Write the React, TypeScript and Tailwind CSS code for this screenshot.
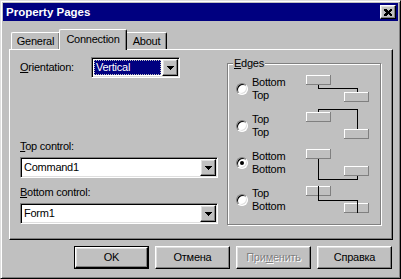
import React from "react";

const raised =
  "border border-t-white border-l-white border-r-black border-b-black shadow-[inset_-1px_-1px_0_#808080,inset_1px_1px_0_#dfdfdf]";
const sunken =
  "border border-t-[#808080] border-l-[#808080] border-r-white border-b-white shadow-[inset_1px_1px_0_#000,inset_-1px_-1px_0_#dfdfdf]";

function Arrow() {
  return (
    <svg width="7" height="4" viewBox="0 0 7 4" shapeRendering="crispEdges">
      <rect x="0" y="0" width="7" height="1" fill="#000" />
      <rect x="1" y="1" width="5" height="1" fill="#000" />
      <rect x="2" y="2" width="3" height="1" fill="#000" />
      <rect x="3" y="3" width="1" height="1" fill="#000" />
    </svg>
  );
}

function DropButton() {
  return (
    <div className={`w-[16px] h-full flex items-center justify-center bg-[#c0c0c0] ${raised}`}>
      <Arrow />
    </div>
  );
}

function U({ children }: { children: React.ReactNode }) {
  return <span className="underline underline-offset-[1px]">{children}</span>;
}

function Radio({ checked }: { checked?: boolean }) {
  return (
    <div
      className={`w-[12px] h-[12px] shrink-0 rounded-full bg-white flex items-center justify-center border border-t-[#808080] border-l-[#808080] border-r-white border-b-white shadow-[inset_1px_1px_0_#000,inset_-1px_-1px_0_#dfdfdf]`}
    >
      {checked && <div className="w-[4px] h-[4px] rounded-full bg-black" />}
    </div>
  );
}

function Box({ x, y }: { x: number; y: number }) {
  return (
    <g shapeRendering="crispEdges">
      <rect x={x} y={y} width="25" height="10" fill="#c0c0c0" />
      <line x1={x} y1={y + 0.5} x2={x + 25} y2={y + 0.5} stroke="#fff" />
      <line x1={x + 0.5} y1={y} x2={x + 0.5} y2={y + 10} stroke="#fff" />
      <line x1={x} y1={y + 9.5} x2={x + 25} y2={y + 9.5} stroke="#808080" />
      <line x1={x + 24.5} y1={y} x2={x + 24.5} y2={y + 10} stroke="#808080" />
    </g>
  );
}

function Diagram({ kind }: { kind: number }) {
  const paths = [
    "M12.5 15V18.5H51.5V22",
    "M12.5 5V2.5H51.5V22",
    "M12.5 15V35.5H51.5V32",
    "M12.5 5V19.5H51.5V32",
  ];
  return (
    <svg width="66" height="38" viewBox="0 0 66 38" className="self-start -mt-[6px] shrink-0">
      <Box x={0} y={5} />
      <Box x={38} y={22} />
      <path d={paths[kind]} stroke="#000" fill="none" strokeWidth="1" shapeRendering="crispEdges" />
    </svg>
  );
}

function EdgeRow({ a, b, kind, checked }: { a: string; b: string; kind: number; checked?: boolean }) {
  return (
    <div className="flex h-[26px] items-center">
      <Radio checked={checked} />
      <div className="ml-[4px] w-[54px] leading-[13px]">
        <div>{a}</div>
        <div>{b}</div>
      </div>
      <Diagram kind={kind} />
    </div>
  );
}

function Button({ children, def, disabled }: { children: React.ReactNode; def?: boolean; disabled?: boolean }) {
  const inner = (
    <div
      className={`h-full w-full flex items-center justify-center bg-[#c0c0c0] ${raised} ${
        disabled ? "text-[#808080] [text-shadow:1px_1px_0_#fff]" : "text-black"
      }`}
    >
      {children}
    </div>
  );
  if (def) {
    return <div className="w-[75px] h-[23px] border border-black">{inner}</div>;
  }
  return <div className="w-[75px] h-[23px]">{inner}</div>;
}

export default function App() {
  return (
    <div className="w-[401px] h-[279px] bg-[#c0c0c0] text-[11px] leading-[13px] tracking-[-0.25px] text-black [font-family:'Liberation_Sans',Arial,sans-serif] border border-t-[#dfdfdf] border-l-[#dfdfdf] border-r-black border-b-black shadow-[inset_1px_1px_0_#fff,inset_-1px_-1px_0_#808080] p-[2px] flex flex-col overflow-hidden">
      {/* Title bar */}
      <div className="h-[18px] shrink-0 bg-[#000080] flex items-center justify-between pl-[3px] pr-[2px]">
        <span className="text-white font-bold text-[11.5px] tracking-normal">Property Pages</span>
        <div className={`w-[16px] h-[14px] bg-[#c0c0c0] flex items-center justify-center ${raised}`}>
          <svg width="8" height="7" viewBox="0 0 8 7" shapeRendering="crispEdges">
            <path d="M0 0h2l2 2 2-2h2v1L6 3.5 8 6v1H6L4 5 2 7H0V6l2-2.5L0 1z" fill="#000" />
          </svg>
        </div>
      </div>

      {/* Body */}
      <div className="flex-1 flex flex-col px-[6px] pt-[8px]">
        {/* Tabs */}
        <div className="flex h-[20px] items-start pl-[2px]">
          <div className="mt-[3px] w-[48px] h-[17px] rounded-tl-[2px] border-t border-l border-t-white border-l-white shadow-[inset_-1px_0_0_#808080] flex items-center justify-center pt-[1px]">
            General
          </div>
          <div className="relative z-10 w-[68px] h-[21px] bg-[#c0c0c0] rounded-t-[2px] border-t border-l border-r border-t-white border-l-white border-r-black shadow-[inset_-1px_0_0_#808080] flex items-start justify-center pt-[3px]">
            Connection
          </div>
          <div className="mt-[3px] w-[40px] h-[17px] rounded-tr-[2px] border-t border-r border-t-white border-r-black shadow-[inset_-1px_0_0_#808080] flex items-center justify-center pt-[1px]">
            About
          </div>
        </div>

        {/* Panel */}
        <div className={`w-[384px] h-[191px] flex ${raised} shadow-[inset_-1px_-1px_0_#808080]`}>
          {/* Left column */}
          <div className="flex flex-col pl-[10px] pt-[7px] w-[208px] box-content">
            <div className="flex items-center h-[21px]">
              <div className="w-[71px]">
                <U>O</U>rientation:
              </div>
              <div className={`w-[89px] h-[21px] bg-white p-[1px] flex ${sunken}`}>
                <div className="flex-1 p-[1px] flex">
                  <div className="flex-1 bg-[#000080] text-white border border-dotted border-[#c0c0c0] pl-[1px] flex items-center">
                    Vertical
                  </div>
                </div>
                <DropButton />
              </div>
            </div>

            <div className="mt-[62px]">
              <U>T</U>op control:
            </div>
            <div className={`mt-[4px] w-[198px] h-[21px] bg-white p-[1px] flex ${sunken}`}>
              <div className="flex-1 pl-[2px] flex items-center">Command1</div>
              <DropButton />
            </div>

            <div className="mt-[8px]">
              <U>B</U>ottom control:
            </div>
            <div className={`mt-[4px] w-[198px] h-[21px] bg-white p-[1px] flex ${sunken}`}>
              <div className="flex-1 pl-[2px] flex items-center">Form1</div>
              <DropButton />
            </div>
          </div>

          {/* Edges group */}
          <div className="relative ml-[-1px] mt-[13px] w-[154px] h-[162px] border border-[#808080] shadow-[inset_1px_1px_0_#fff,1px_1px_0_#fff] pl-[8px] pt-[12px] flex flex-col gap-[11px]">
            <span className="absolute left-[5px] top-[-7px] px-[1px] bg-[#c0c0c0]">
              <U>E</U>dges
            </span>
            <EdgeRow a="Bottom" b="Top" kind={0} />
            <EdgeRow a="Top" b="Top" kind={1} />
            <EdgeRow a="Bottom" b="Bottom" kind={2} checked />
            <EdgeRow a="Top" b="Bottom" kind={3} />
          </div>
        </div>

        {/* Buttons */}
        <div className="mt-[6px] flex justify-end gap-[6px]">
          <Button def>OK</Button>
          <Button>Отмена</Button>
          <Button disabled>
            При<U>м</U>енить
          </Button>
          <Button>Справка</Button>
        </div>
      </div>
    </div>
  );
}
